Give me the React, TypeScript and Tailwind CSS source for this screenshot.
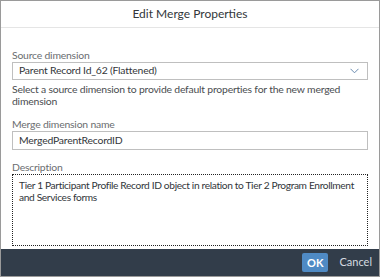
export default function App() {
  return (
    <div className="w-[380px] h-[277px] bg-[#9a9a9a] p-px font-['Lato',Arial,sans-serif]">
      <div className="flex h-full flex-col bg-white">
        <div className="flex h-[27px] shrink-0 items-center justify-center border-b border-[#e5e5e5] text-[12px] text-[#32363a]">
          Edit Merge Properties
        </div>

        <div className="flex flex-1 flex-col px-[11px] pt-[21px] text-[10.4px] tracking-[-0.2px]">
          <label className="leading-[13px] text-[#6a6d70]">Source dimension</label>
          <div className="flex h-[18px] items-center justify-between border border-[#bfbfbf] pl-[6px] pr-[8px] text-[#32363a]">
            <span>Parent Record Id_62 (Flattened)</span>
            <svg width="9" height="6" viewBox="0 0 9 6" fill="none">
              <path d="M0.5 0.8 L4.5 4.8 L8.5 0.8" stroke="#6a8bb0" strokeWidth="1" />
            </svg>
          </div>
          <p className="mt-[3px] leading-[12px] text-[#4a4d50]">
            Select a source dimension to provide default properties for the new merged dimension
          </p>

          <label className="mt-[11px] leading-[13px] text-[#6a6d70]">Merge dimension name</label>
          <div className="flex h-[19px] items-center border border-[#bfbfbf] pl-[6px] text-[#32363a]">
            MergedParentRecordID
          </div>

          <label className="mt-[11px] leading-[13px] text-[#6a6d70]">Description</label>
          <div className="h-[72px] border border-dotted border-[#222] pl-[6px] pr-0 pt-[4px] text-[10.2px] leading-[12px] tracking-[-0.35px] text-[#32363a]">
            Tier 1 Participant Profile Record ID object in relation to Tier 2 Program Enrollment and Services forms
          </div>
        </div>

        <div className="flex h-[27px] shrink-0 items-center justify-end gap-[11px] bg-[#323d4a] pr-[7px]">
          <button className="h-[19px] rounded-[2px] bg-[#4f8ac4] px-[5px] text-[11px] font-bold leading-[19px] text-white">OK</button>
          <button className="text-[11px] text-[#d5dbe0]">Cancel</button>
        </div>
      </div>
    </div>
  )
}
